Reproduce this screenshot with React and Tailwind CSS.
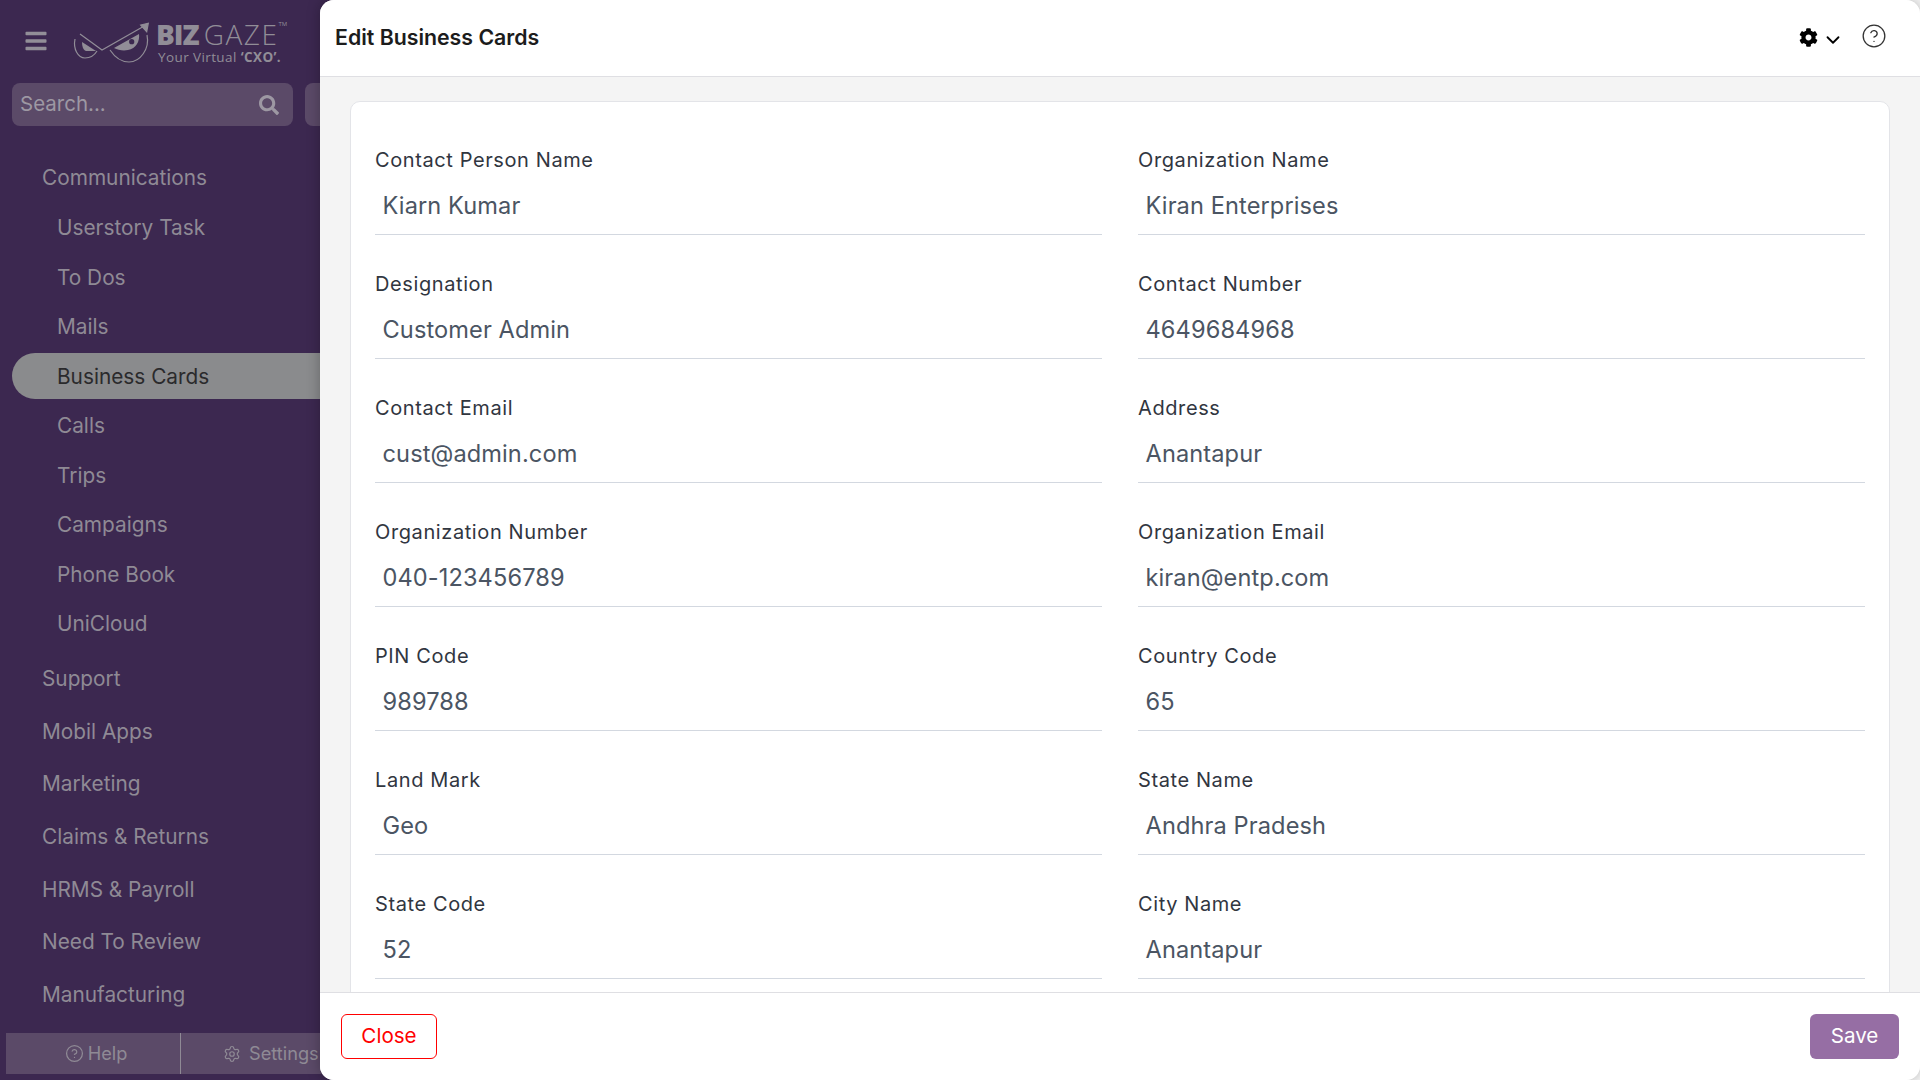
import { ChevronDown, CircleHelp, Settings } from 'lucide-react'
import { FaBars, FaCog, FaSearch } from 'react-icons/fa'

const NAV = [
  { label: 'Communications', top: true },
  { label: 'Userstory Task' },
  { label: 'To Dos' },
  { label: 'Mails' },
  { label: 'Business Cards', active: true },
  { label: 'Calls' },
  { label: 'Trips' },
  { label: 'Campaigns' },
  { label: 'Phone Book' },
  { label: 'UniCloud' },
  { label: 'Support', top: true },
  { label: 'Mobil Apps', top: true },
  { label: 'Marketing', top: true },
  { label: 'Claims & Returns', top: true },
  { label: 'HRMS & Payroll', top: true },
  { label: 'Need To Review', top: true },
  { label: 'Manufacturing', top: true },
]

const FIELDS = [
  ['Contact Person Name', 'Kiarn Kumar'],
  ['Organization Name', 'Kiran Enterprises'],
  ['Designation', 'Customer Admin'],
  ['Contact Number', '4649684968'],
  ['Contact Email', 'cust@admin.com'],
  ['Address', 'Anantapur'],
  ['Organization Number', '040-123456789'],
  ['Organization Email', 'kiran@entp.com'],
  ['PIN Code', '989788'],
  ['Country Code', '65'],
  ['Land Mark', 'Geo'],
  ['State Name', 'Andhra Pradesh'],
  ['State Code', '52'],
  ['City Name', 'Anantapur'],
]

function Logo() {
  return (
    <div className="flex items-start ml-[26px] mt-[15px]">
      <svg width="75" height="40" viewBox="0 0 75 40" fill="none" stroke="#918d97" strokeWidth="1.2" className="shrink-0 overflow-visible">
        <path d="M1 16 C-1 26 4 35 11 35 C16 35 20 33 23 28" />
        <path d="M6 11 L28 27 L72 2" />
        <path d="M66.7 2 L74.3 0.3 L72.7 8.7 Z" fill="#918d97" />
        <path d="M36 27 C42 36 48 39 55 39 C66 39 76 26 73 12" />
        <path d="M8 19 L22 28 L12 28 C9 27 8 23 8 19 Z" fill="#918d97" stroke="none" />
        <path d="M40 25 L65 11 C66 18 62 26 54 27 C49 28 44 27 40 25 Z" fill="#918d97" stroke="none" />
        <circle cx="57.7" cy="18.7" r="2.6" fill="#3c2850" stroke="none" />
      </svg>
      <div className="ml-[7px] mt-[1px] text-[#918d97] font-['Open_Sans',sans-serif]">
        <div className="flex items-start h-[21px] text-[28px] leading-[21px]">
          <span className="font-extrabold tracking-[-1px]">BIZ</span>
          <span className="ml-[5px] font-light tracking-[1.5px]">GAZE</span>
          <span className="text-[6px] leading-none -mt-[3px]">TM</span>
        </div>
        <div className="text-[13.5px] leading-[16px] tracking-[0.4px] whitespace-nowrap mt-[4px] ml-[2px]">
          Your Virtual <span className="font-bold">‘CXO’.</span>
        </div>
      </div>
    </div>
  )
}

function Sidebar() {
  return (
    <aside className="w-[340px] shrink-0 h-full bg-[#3c2850] text-[#8f8a95] flex flex-col overflow-hidden">
      <div className="h-[83px] shrink-0 flex items-start pt-[8px]">
        <FaBars className="ml-[24px] mt-[21px] w-[24px] h-[24px] shrink-0 text-[#928e98]" />
        <Logo />
      </div>
      <div className="flex items-center shrink-0 h-[43px] pl-[12px] gap-[12px]">
        <div className="w-[281px] shrink-0 h-full rounded-[8px] bg-[#5b4a68] flex items-center justify-between pl-[8px] pr-[14px]">
          <span className="text-[20.5px] text-[#9d98a3]">Search...</span>
          <FaSearch className="w-[20px] h-[20px] text-[#9d98a3]" />
        </div>
        <div className="w-[40px] shrink-0 h-full rounded-[8px] bg-[#5b4a68]" />
      </div>
      <nav className="pt-[27px] flex-1">
        {NAV.map(item => (
          <div key={item.label}
            className={`flex items-center text-[20.8px] ${item.top ? 'h-[52.6px] pl-[42px]' : 'h-[49.5px] pl-[57px]'} ${item.label === 'Communications' ? '!h-[50px]' : ''} ${item.label === 'Support' ? 'mt-[4px]' : ''}`}>
            {item.active
              ? <div className="-ml-[45px] pl-[45px] h-[46px] w-[328px] shrink-0 rounded-l-full bg-[#8a8b8d] text-[#2a2a2c] flex items-center">{item.label}</div>
              : item.label}
          </div>
        ))}
      </nav>
      <div className="shrink-0 h-[41px] mb-[6px] ml-[6px] bg-[#5b4a68] flex items-center text-[18.2px]">
        <div className="w-[175px] shrink-0 h-full flex items-center justify-center gap-[4px] pl-[6px] border-r border-[#8f8a95]">
          <CircleHelp className="w-[19px] h-[19px]" strokeWidth={1.6} />
          Help
        </div>
        <div className="flex items-center h-full pl-[42px] gap-[8px] whitespace-nowrap">
          <Settings className="w-[18px] h-[18px]" strokeWidth={1.6} />
          Settings
        </div>
      </div>
    </aside>
  )
}

function Field({ label, value }) {
  return (
    <div>
      <div className="h-[28px] pt-[1px] text-[20px] tracking-[0.6px] leading-[28px] text-[#31363f]">{label}</div>
      <div className="h-[62px] border-b border-[#d3d8e0] pl-[7.5px] pt-[5px] text-[23.6px] tracking-[0.1px] leading-[56px] text-[#4b5563]">{value}</div>
    </div>
  )
}

export default function App() {
  return (
    <div className="flex h-screen w-[1920px] overflow-hidden bg-[#f7f7f7] font-['Inter',sans-serif]">
      <Sidebar />
      <main className="relative -ml-[20px] w-[1600px] h-full flex flex-col overflow-hidden rounded-[14px] bg-[#f4f4f4] shadow-[0_0_14px_rgba(0,0,0,0.28)]">
        <header className="h-[77px] shrink-0 bg-white border-b border-[#dfdfe3] flex items-center pl-[15px] pr-[33px]">
          <h1 className="text-[21.3px] font-semibold text-[#1c1c1c]">Edit Business Cards</h1>
          <div className="ml-auto flex items-center text-black">
            <FaCog className="w-[19px] h-[19px] -mt-[2px]" />
            <ChevronDown className="w-[22px] h-[22px] ml-[4px] mt-[3px]" strokeWidth={2} />
            <CircleHelp className="w-[26px] h-[26px] ml-[17px] -mt-[5px] text-[#333333]" strokeWidth={1.2} />
          </div>
        </header>

        <div className="flex-1 min-h-0 overflow-hidden px-[30px] pt-[24px]">
          <div className="bg-white border border-[#e3e4e8] rounded-[10px] px-[24px] pt-[43px] pb-[40px]">
            <div className="grid grid-cols-2 gap-x-[36px] gap-y-[34px]">
              {FIELDS.map(f => <Field key={f[0]} label={f[0]} value={f[1]} />)}
            </div>
          </div>
        </div>

        <footer className="h-[88px] shrink-0 bg-white border-t border-[#dfdfe3] flex items-center justify-between px-[21px]">
          <button type="button" className="w-[96px] h-[45px] rounded-[6px] border border-[#ff0000] text-[20.6px] text-[#ff0000]">Close</button>
          <button type="button" className="w-[89px] h-[45px] rounded-[6px] bg-[#966ea4] text-[20.6px] text-white">Save</button>
        </footer>
      </main>
    </div>
  )
}
